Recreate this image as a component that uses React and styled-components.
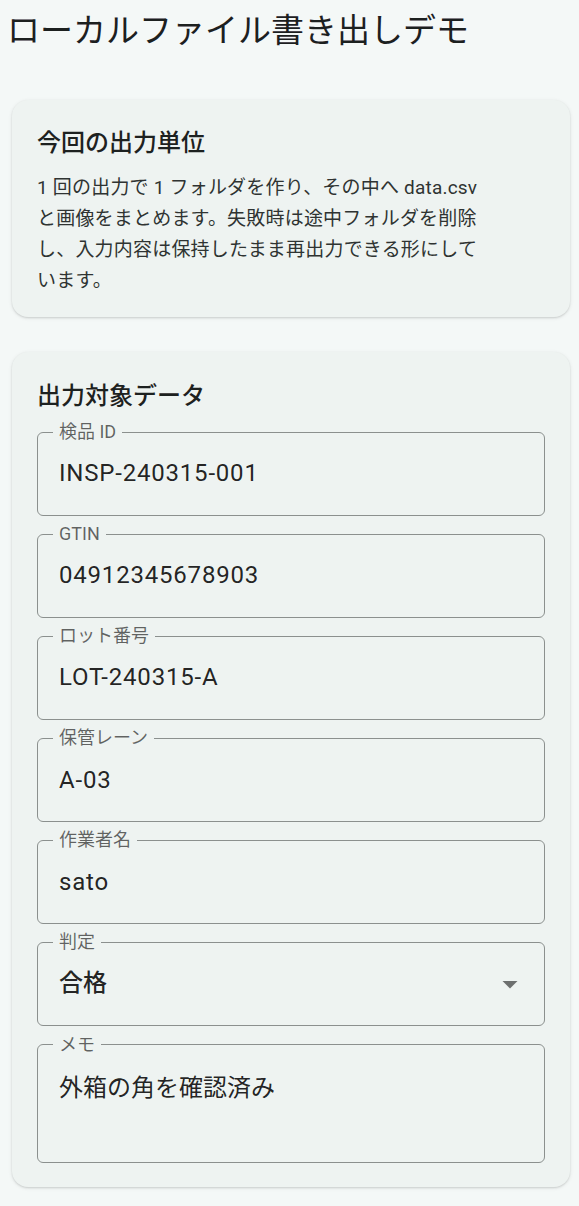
import * as React from "react";
import styled, { createGlobalStyle } from "styled-components";

const GlobalStyle = createGlobalStyle`
  body {
    margin: 0;
    background: #f4f8f7;
    font-family: Roboto, "Noto Sans CJK JP", sans-serif;
    color: rgba(0, 0, 0, 0.87);
  }
`;

/* ---- Page ---- */

const Page = styled.main`
  display: flex;
  flex-direction: column;
  padding: 11px 9px 18px 12px;
`;

const Title = styled.h1`
  margin: 0 0 49px -5px;
  font-size: 33px;
  line-height: 40px;
  font-weight: 400;
  color: #1c201f;
`;

const Card = styled.section`
  background: #eef3f1;
  border-radius: 16px;
  box-shadow: 0 1px 2px rgba(0, 0, 0, 0.12), 0 1px 4px rgba(0, 0, 0, 0.08);
  padding: ${(p) => p.$pad};
  margin-bottom: 35px;
`;

const CardHeading = styled.h2`
  margin: 0 0 ${(p) => p.$gap}px;
  font-size: 24px;
  line-height: 32px;
  font-weight: 500;
  color: #1d2120;
`;

const Body = styled.p`
  margin: 0;
  max-width: 456px;
  font-size: 19px;
  line-height: 31px;
  letter-spacing: 0.2px;
  color: #2f3332;
`;

/* ---- Outlined fields ---- */

const FieldList = styled.div`
  display: flex;
  flex-direction: column;
  gap: 9.6px;
`;

const Fieldset = styled.fieldset`
  margin: 0;
  min-width: 0;
  padding: 15px 15px 24px;
  border: 1px solid #8b908e;
  border-radius: 6px;
`;

const Legend = styled.legend`
  padding: 0 6px;
  font-size: 18px;
  line-height: 18px;
  color: rgba(0, 0, 0, 0.6);
`;

const Input = styled.input`
  display: block;
  width: 100%;
  box-sizing: border-box;
  height: 34.5px;
  padding: 0 6px;
  border: none;
  outline: none;
  background: transparent;
  font: inherit;
  font-size: 24px;
  line-height: 34.5px;
  letter-spacing: 0.8px;
  color: rgba(0, 0, 0, 0.87);
`;

const TextArea = styled.textarea`
  display: block;
  width: 100%;
  box-sizing: border-box;
  height: 69px;
  padding: 2px 6px 0;
  border: none;
  outline: none;
  resize: none;
  background: transparent;
  font: inherit;
  font-size: 24px;
  line-height: 34.5px;
  color: rgba(0, 0, 0, 0.87);
`;

const SelectBox = styled.div`
  display: flex;
  align-items: center;
  justify-content: space-between;
  height: 34.5px;
  padding: 0 0 0 6px;
  font-size: 24px;
  font-weight: 500;
  line-height: 34.5px;
  color: rgba(0, 0, 0, 0.87);
  cursor: pointer;

  svg {
    width: 36px;
    height: 36px;
    margin-right: 1px;
    fill: rgba(0, 0, 0, 0.54);
  }
`;

function TextField({ label, value, multiline }) {
  return (
    <Fieldset>
      <Legend>{label}</Legend>
      {multiline ? (
        <TextArea rows={2} defaultValue={value} />
      ) : (
        <Input defaultValue={value} />
      )}
    </Fieldset>
  );
}

function SelectField({ label, value }) {
  return (
    <Fieldset>
      <Legend>{label}</Legend>
      <SelectBox role="button">
        <span>{value}</span>
        <svg viewBox="0 0 24 24" aria-hidden="true">
          <path d="M7 10l5 5 5-5z" />
        </svg>
      </SelectBox>
    </Fieldset>
  );
}

const fields = [
  { label: "検品 ID", value: "INSP-240315-001" },
  { label: "GTIN", value: "04912345678903" },
  { label: "ロット番号", value: "LOT-240315-A" },
  { label: "保管レーン", value: "A-03" },
  { label: "作業者名", value: "sato" },
];

/* ---- Entry Point ---- */

export default function App() {
  return (
    <>
      <GlobalStyle />
      <Page>
        <Title>ローカルファイル書き出しデモ</Title>

        <Card $pad="27px 25px 21px">
          <CardHeading $gap={13}>今回の出力単位</CardHeading>
          <Body>
            1 回の出力で 1 フォルダを作り、その中へ data.csv と画像をまとめます。失敗時は途中フォルダを削除し、入力内容は保持したまま再出力できる形にしています。
          </Body>
        </Card>

        <Card $pad="28px 25px 24px">
          <CardHeading $gap={11}>出力対象データ</CardHeading>
          <FieldList>
            {fields.map((f) => (
              <TextField key={f.label} label={f.label} value={f.value} />
            ))}
            <SelectField label="判定" value="合格" />
            <TextField label="メモ" value="外箱の角を確認済み" multiline />
          </FieldList>
        </Card>
      </Page>
    </>
  );
}
